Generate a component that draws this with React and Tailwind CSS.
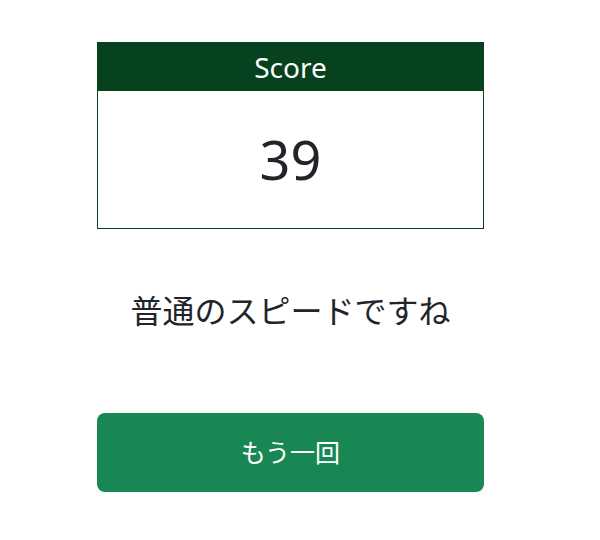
import React from "react";

const App = () => {
    return (
        <div
            className="min-h-screen bg-white pt-[42px] pl-[97px]"
            style={{ fontFamily: '"Noto Sans", "Noto Sans CJK JP", sans-serif' }}
        >
            <div className="w-[387px]">
                {/* Score card */}
                <div className="border border-[#08421f]">
                    <div className="h-[48px] bg-[#07421f] flex items-center justify-center text-white text-[28px]">
                        Score
                    </div>
                    <div className="h-[137px] flex items-center justify-center text-[54px] text-[#212529]">
                        39
                    </div>
                </div>

                {/* Message */}
                <div className="mt-[58px] text-center text-[32px] text-[#212529] leading-[48px]">
                    普通のスピードですね
                </div>

                {/* Retry button */}
                <button className="mt-[78px] w-full h-[79px] rounded-lg bg-[#198754] text-white text-[25px]">
                    もう一回
                </button>
            </div>
        </div>
    );
};

export default App;
